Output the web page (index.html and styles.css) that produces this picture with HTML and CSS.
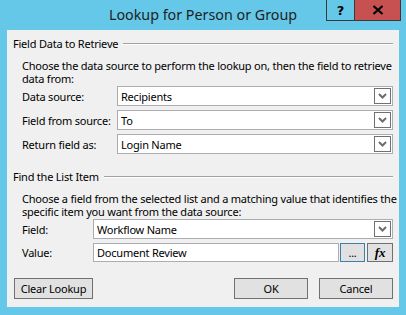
FILE: index.html
```html
<!DOCTYPE html>
<html>
<head>
<meta charset="utf-8">
<link rel="stylesheet" href="styles.css">
</head>
<body>
<div class="window">
  <div class="titlebar">
    <div class="tb-spacer"></div>
    <div class="title">Lookup for Person or Group</div>
    <div class="caption-btns">
      <div class="cap help">?</div>
      <div class="cap close">
        <svg width="12" height="10" viewBox="0 0 12 10"><path d="M1.5 1 L10.5 9 M10.5 1 L1.5 9" stroke="#000" stroke-width="2.2" fill="none"/></svg>
      </div>
    </div>
  </div>
  <div class="client">
    <div class="group-head"><span>Field Data to Retrieve</span><div class="rule"></div></div>
    <div class="group-body">
      <p class="desc">Choose the data source to perform the lookup on, then the field to retrieve<br>data from:</p>
      <div class="form form-a">
        <label>Data source:</label>
        <div class="combo"><span>Recipients</span><div class="dd"><svg width="9" height="6" viewBox="0 0 9 6"><path d="M1 1 L4.5 4.5 L8 1" stroke="#6d6d6d" stroke-width="2" fill="none"/></svg></div></div>
        <label>Field from source:</label>
        <div class="combo"><span>To</span><div class="dd"><svg width="9" height="6" viewBox="0 0 9 6"><path d="M1 1 L4.5 4.5 L8 1" stroke="#6d6d6d" stroke-width="2" fill="none"/></svg></div></div>
        <label>Return field as:</label>
        <div class="combo"><span>Login Name</span><div class="dd"><svg width="9" height="6" viewBox="0 0 9 6"><path d="M1 1 L4.5 4.5 L8 1" stroke="#6d6d6d" stroke-width="2" fill="none"/></svg></div></div>
      </div>
    </div>
    <div class="group-head group2"><span>Find the List Item</span><div class="rule"></div></div>
    <div class="group-body">
      <p class="desc">Choose a field from the selected list and a matching value that identifies the<br>specific item you want from the data source:</p>
      <div class="form form-b">
        <label>Field:</label>
        <div class="combo"><span>Workflow Name</span><div class="dd"><svg width="9" height="6" viewBox="0 0 9 6"><path d="M1 1 L4.5 4.5 L8 1" stroke="#6d6d6d" stroke-width="2" fill="none"/></svg></div></div>
        <label>Value:</label>
        <div class="value-row">
          <div class="textbox"><span>Document Review</span></div>
          <div class="sbtn dots">...</div>
          <div class="sbtn fx">fx</div>
        </div>
      </div>
    </div>
    <div class="footer">
      <div class="btn">Clear Lookup</div>
      <div class="footer-right">
        <div class="btn">OK</div>
        <div class="btn">Cancel</div>
      </div>
    </div>
  </div>
</div>
</body>
</html>
```
FILE: styles.css
```css
html, body {
  margin: 0;
  padding: 0;
}
body {
  background: #65c8e8;
  font-family: "Noto Sans", "Liberation Sans", sans-serif;
  font-size: 11px;
  letter-spacing: -0.22px;
  color: #000;
  width: 406px;
  height: 315px;
  overflow: hidden;
  white-space: nowrap;
}
.window {
  display: flex;
  flex-direction: column;
}
.titlebar {
  height: 30px;
  display: grid;
  grid-template-columns: 1fr auto 1fr;
  align-items: start;
}
.title {
  font-size: 14.3px;
  letter-spacing: 0;
  color: #1e1e1e;
  line-height: 30px;
}
.caption-btns {
  display: flex;
  justify-content: flex-end;
  margin-right: 5px;
}
.cap {
  height: 21px;
  box-sizing: border-box;
  border: 1px solid #3a3a3a;
  border-top: none;
  display: flex;
  align-items: center;
  justify-content: center;
}
.help {
  width: 28px;
  font-weight: bold;
  font-size: 13px;
  font-family: "DejaVu Sans", sans-serif;
  border-right: none;
}
.close {
  width: 47px;
  background: #c75050;
}
.client {
  margin: 0 7px;
  height: 277px;
  background: #f0f0f0;
  box-sizing: border-box;
  padding: 6px 6px 0 6px;
  display: flex;
  flex-direction: column;
}
.group-head {
  display: flex;
  align-items: center;
  height: 16px;
  line-height: 16px;
}
.group-head .rule {
  flex: 1;
  height: 1px;
  background: #a0a0a0;
  border-bottom: 1px solid #fff;
  margin-left: 5px;
  margin-top: -1px;
}
.group2 {
  margin-top: 15px;
}
.group-body {
  padding-left: 9px;
}
.desc {
  margin: 7px 0 0 0;
  line-height: 13px;
}
.form {
  display: grid;
  row-gap: 4px;
  align-items: center;
  margin-top: 1px;
}
.form-a {
  grid-template-columns: 95px 1fr;
}
.form-b {
  grid-template-columns: 71px 1fr;
}
.combo, .textbox {
  height: 20px;
  box-sizing: border-box;
  border: 1px solid #abadb3;
  background: #fff;
  display: flex;
  align-items: center;
  padding-left: 3px;
}
.combo span, .textbox span {
  flex: 1;
}
.dd {
  width: 17px;
  height: 16px;
  box-sizing: border-box;
  border: 1px solid #707070;
  background: #fff;
  margin-right: 1px;
  display: flex;
  align-items: center;
  justify-content: center;
}
.value-row {
  display: flex;
  height: 19px;
}
.value-row .textbox {
  flex: 1;
  height: 19px;
}
.sbtn {
  height: 19px;
  box-sizing: border-box;
  background: #e1e1e1;
  display: flex;
  align-items: center;
  justify-content: center;
}
.dots {
  width: 25px;
  margin-left: 1px;
  border: 1px solid #3c7fb1;
  line-height: 10px;
}
.fx {
  width: 26px;
  margin-left: 2px;
  border: 1px solid #707070;
  font-family: "Liberation Serif", serif;
  font-style: italic;
  font-weight: bold;
  font-size: 13px;
}
.footer {
  display: flex;
  justify-content: space-between;
  margin-top: 16px;
  padding-left: 1px;
}
.footer-right {
  display: flex;
  gap: 11px;
}
.btn {
  height: 21px;
  box-sizing: border-box;
  border: 1px solid #707070;
  background: #e1e1e1;
  display: flex;
  align-items: center;
  justify-content: center;
  width: 74px;
}
.footer > .btn {
  width: 79px;
}
```
